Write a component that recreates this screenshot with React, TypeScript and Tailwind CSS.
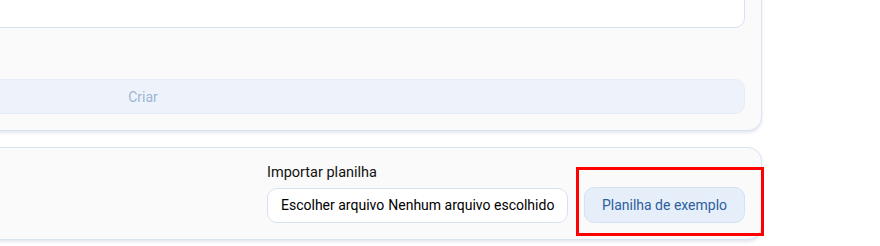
export default function App() {
    return (
        <div className="w-[880px] h-[246px] overflow-hidden bg-white font-['Roboto',sans-serif]">
            <div className="-ml-[476px] -mt-[89px] w-[1238px] flex flex-col gap-4">
                <section className="rounded-[14px] border border-[#d9e4f3] bg-[#fafafa] p-4 shadow-[0_2px_3px_rgba(30,60,110,0.12)]">
                    <div className="h-[100px] rounded-[10px] border border-[#d6e2f3] bg-white" />
                    <button className="mt-[51px] h-[35px] w-full rounded-[10px] border border-[#e6edf8] bg-[#eef3fb] pt-[1px] text-[14px] text-[#9db6d2]">
                        Criar
                    </button>
                </section>

                <section className="rounded-[14px] border border-[#d9e4f3] bg-[#fafafa] p-4 shadow-[0_2px_3px_rgba(30,60,110,0.12)]">
                    <div className="flex justify-end items-end gap-4">
                        <div className="flex flex-col gap-[6px]">
                            <span className="text-[14.5px] leading-[18px] text-[#111]">Importar planilha</span>
                            <label className="flex h-[35px] w-[301px] items-center whitespace-nowrap rounded-[10px] border border-[#d6e2f3] bg-white px-[13px] text-[14px] text-black">
                                <input type="file" className="hidden" />
                                <span>Escolher arquivo</span>
                                <span className="ml-1">Nenhum arquivo escolhido</span>
                            </label>
                        </div>
                        <div className="relative">
                            <button className="h-[36px] w-[161px] whitespace-nowrap rounded-[10px] border border-[#d4e2f5] bg-[#e6eef9] text-[14px] text-[#2c5f9e]">
                                Planilha de exemplo
                            </button>
                            <div className="absolute -left-[8px] -top-[20px] w-[188px] h-[69px] border-[3px] border-[#ff0000] pointer-events-none" />
                        </div>
                    </div>
                </section>
            </div>
        </div>
    );
}
